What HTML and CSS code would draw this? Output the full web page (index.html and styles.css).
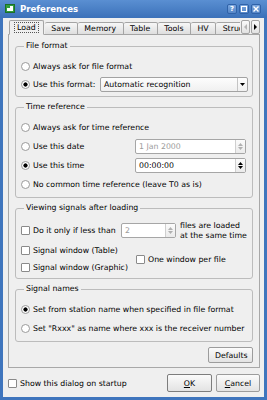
FILE: index.html
```html
<!DOCTYPE html>
<html lang="en">
<head>
  <meta charset="UTF-8">
  <title>Preferences</title>
  <link rel="stylesheet" href="styles.css">
</head>
<body>
<div class="window">
  <div class="titlebar">
    <svg class="app-icon" width="10" height="9" viewBox="0 0 10 9">
      <rect x="0.5" y="0.5" width="9" height="8" fill="#2f9e3c" stroke="#1d6e28"/>
      <rect x="2" y="2" width="6" height="5" fill="#fff"/>
      <rect x="2" y="2" width="3" height="2" fill="#2f9e3c"/>
    </svg>
    <span class="title">Preferences</span>
    <span class="tb-btn">?</span>
    <span class="tb-btn"><svg width="8" height="8" viewBox="0 0 8 8"><rect x="1.5" y="1.5" width="5" height="5" fill="none" stroke="#fff"/></svg></span>
    <span class="tb-btn"><svg width="8" height="8" viewBox="0 0 8 8"><path d="M1.5 1.5 L6.5 6.5 M6.5 1.5 L1.5 6.5" stroke="#fff" stroke-width="1.4"/></svg></span>
  </div>

  <div class="frame">
    <div class="client">
      <div class="tabbar">
        <div class="tabs">
          <span class="tab active"><span class="focus">Load</span></span>
          <span class="tab">Save</span>
          <span class="tab">Memory</span>
          <span class="tab">Table</span>
          <span class="tab">Tools</span>
          <span class="tab">HV</span>
          <span class="tab">Structure</span>
        </div>
        <span class="scroll-btn off"><svg width="5" height="6" viewBox="0 0 5 6"><path d="M4 0 L1 3 L4 6 Z" fill="#b5b5b5"/></svg></span>
        <span class="scroll-btn"><svg width="5" height="6" viewBox="0 0 5 6"><path d="M1 0 L4 3 L1 6 Z" fill="#000"/></svg></span>
      </div>

      <div class="pane">
        <fieldset class="group">
          <legend>File format</legend>
          <div class="row"><input type="radio"><span>Always ask for file format</span></div>
          <div class="row">
            <span class="lbl lbl-format"><input type="radio" checked><span>Use this format:</span></span>
            <span class="combo"><span class="combo-text">Automatic recognition</span><span class="combo-arrow"><svg width="5" height="3" viewBox="0 0 5 3"><path d="M0 0 H5 L2.5 3 Z" fill="#000"/></svg></span></span>
          </div>
        </fieldset>

        <fieldset class="group">
          <legend>Time reference</legend>
          <div class="row r19"><input type="radio"><span>Always ask for time reference</span></div>
          <div class="row r19">
            <span class="lbl lbl-time"><input type="radio"><span>Use this date</span></span>
            <span class="spin wide disabled"><span class="spin-text">1 Jan 2000</span><span class="spin-btns"><svg width="5" height="3" viewBox="0 0 5 3"><path d="M0 3 H5 L2.5 0 Z" fill="#b0b0b0"/></svg><svg width="5" height="3" viewBox="0 0 5 3"><path d="M0 0 H5 L2.5 3 Z" fill="#b0b0b0"/></svg></span></span>
          </div>
          <div class="row r19">
            <span class="lbl lbl-time"><input type="radio" checked><span>Use this time</span></span>
            <span class="spin wide"><span class="spin-text">00:00:00</span><span class="spin-btns"><svg width="5" height="3" viewBox="0 0 5 3"><path d="M0 3 H5 L2.5 0 Z" fill="#000"/></svg><svg width="5" height="3" viewBox="0 0 5 3"><path d="M0 0 H5 L2.5 3 Z" fill="#000"/></svg></span></span>
          </div>
          <div class="row r19"><input type="radio"><span>No common time reference (leave T0 as is)</span></div>
        </fieldset>

        <fieldset class="group viewing">
          <legend>Viewing signals after loading</legend>
          <div class="row tall">
            <span class="lbl lbl-less"><input type="checkbox"><span>Do it only if less than</span></span>
            <span class="spin small disabled"><span class="spin-text">2</span><span class="spin-btns"><svg width="5" height="3" viewBox="0 0 5 3"><path d="M0 3 H5 L2.5 0 Z" fill="#b0b0b0"/></svg><svg width="5" height="3" viewBox="0 0 5 3"><path d="M0 0 H5 L2.5 3 Z" fill="#b0b0b0"/></svg></span></span>
            <span class="two-line">files are loaded<br>at the same time</span>
          </div>
          <div class="windows">
            <div class="row r17"><input type="checkbox"><span>Signal window (Table)</span></div>
            <div class="row r17 per-file"><input type="checkbox"><span>One window per file</span></div>
            <div class="row r17"><input type="checkbox"><span>Signal window (Graphic)</span></div>
          </div>
        </fieldset>

        <fieldset class="group">
          <legend>Signal names</legend>
          <div class="row r19"><input type="radio" checked><span>Set from station name when specified in file format</span></div>
          <div class="row r19"><input type="radio"><span>Set "Rxxx" as name where xxx is the receiver number</span></div>
        </fieldset>

        <div class="pane-foot">
          <button class="btn defaults">Defaults</button>
        </div>
      </div>

      <div class="bottom">
        <span class="startup"><input type="checkbox"><span>Show this dialog on startup</span></span>
        <button class="btn ok"><u>O</u>K</button>
        <button class="btn cancel"><u>C</u>ancel</button>
      </div>
    </div>
  </div>
</div>
</body>
</html>
```

FILE: styles.css
```css
* {
  box-sizing: border-box;
}
body {
  margin: 0;
  font-family: "DejaVu Sans", sans-serif;
  font-size: 7.8px;
  color: #000;
}
.window {
  width: 267px;
  height: 400px;
  display: flex;
  flex-direction: column;
  background: #3f75bd;
}
.titlebar {
  height: 19px;
  display: flex;
  align-items: center;
  padding: 0 6px 1px 5px;
  background: linear-gradient(#5a8fd2, #3b71b9);
  color: #fff;
}
.app-icon {
  margin-right: 5px;
}
.title {
  font-weight: bold;
  font-size: 8.6px;
  flex: 1;
}
.tb-btn {
  width: 10px;
  height: 10px;
  margin-left: 2px;
  display: flex;
  align-items: center;
  justify-content: center;
  background: linear-gradient(#7aa6de, #5687c8);
  border: 1px solid #2f62a8;
  border-radius: 2px;
  font-weight: bold;
  font-size: 7px;
}
.frame {
  flex: 1;
  display: flex;
  padding: 0 4px 3px 3px;
}
.client {
  flex: 1;
  display: flex;
  flex-direction: column;
  background: #efefef;
  padding: 3px 4px 5px 5px;
}

/* tabs */
.tabbar {
  display: flex;
  align-items: flex-end;
  height: 14px;
  position: relative;
  z-index: 1;
  margin-bottom: -1px;
}
.tabs {
  display: flex;
  align-items: flex-end;
  width: 232px;
  overflow: hidden;
  padding-left: 1px;
}
.tab {
  flex: none;
  height: 13px;
  padding: 0 6.5px;
  display: flex;
  align-items: center;
  border: 1px solid #a4a4a4;
  border-left: none;
  border-radius: 2px 2px 0 0;
  background: linear-gradient(#f7f7f7, #dedede);
}
.tab.active {
  height: 15px;
  padding: 0 4px;
  border-left: 1px solid #a4a4a4;
  border-bottom-color: #efefef;
  background: #efefef;
  margin-right: 1px;
}
.focus {
  border: 1px dotted #555;
  padding: 0 2px;
  line-height: 9px;
}
.scroll-btn {
  width: 9px;
  height: 14px;
  margin-left: 1px;
  margin-bottom: 1px;
  display: flex;
  align-items: center;
  justify-content: center;
  border: 1px solid #a4a4a4;
  border-radius: 2px;
  background: linear-gradient(#fafafa, #e2e2e2);
}
.pane {
  flex: 1;
  display: flex;
  flex-direction: column;
  border: 1px solid #a8a8a8;
  background: #efefef;
  padding: 6px 6px 4px 6px;
}

/* group boxes */
.group {
  margin: 0 0 5px;
  border: 1px solid #bcbcbc;
  border-radius: 3px;
  padding: 6px 4px 3px 5px;
}
.group.viewing {
  padding-bottom: 2px;
}
.group legend {
  margin-left: 3px;
  padding: 0 2px;
  line-height: 10px;
}
.row {
  display: flex;
  align-items: center;
  height: 18px;
  white-space: nowrap;
}
.r19 {
  height: 19px;
}
.r17 {
  height: 17px;
}
.row.tall {
  height: 23px;
}
.lbl {
  display: flex;
  align-items: center;
}
.lbl-format {
  width: 79px;
}
.lbl-time {
  width: 114px;
}
.lbl-less {
  width: 100px;
}
input[type=radio],
input[type=checkbox] {
  appearance: none;
  margin: 0 3px 0 0;
  width: 9px;
  height: 9px;
  background: #fff;
  border: 1px solid #9a9a9a;
  flex: none;
}
input[type=radio] {
  border-radius: 50%;
}
input[type=radio]:checked {
  background: radial-gradient(circle, #000 0 1.8px, #fff 2.4px);
}
input[type=checkbox] {
  border-radius: 1px;
  border-color: #8a8a8a;
}

.combo {
  flex: 1;
  height: 15px;
  display: flex;
  border: 1px solid #a2a2a2;
  border-radius: 2px;
  background: linear-gradient(#fdfdfd, #f0f0f0);
}
.combo-text {
  flex: 1;
  padding-left: 3px;
  line-height: 13px;
}
.combo-arrow {
  width: 10px;
  display: flex;
  align-items: center;
  justify-content: center;
  border-left: 1px solid #c4c4c4;
}

.spin {
  height: 15px;
  display: flex;
  border: 1px solid #a6a6a6;
  border-radius: 2px;
  background: #fff;
}
.spin.wide {
  width: 111px;
}
.spin.small {
  width: 55px;
}
.spin-text {
  flex: 1;
  padding-left: 3px;
  line-height: 13px;
}
.spin.disabled .spin-text {
  color: #9c9c9c;
}
.spin-btns {
  width: 10px;
  display: flex;
  flex-direction: column;
  align-items: center;
  justify-content: space-around;
  padding: 2px 0;
  border-left: 1px solid #cfcfcf;
  background: linear-gradient(#fbfbfb, #ebebeb);
}
.two-line {
  margin-left: 4px;
  line-height: 10px;
}
.windows {
  display: grid;
  grid-template-columns: 115px auto;
}
.per-file {
  grid-column: 2;
  grid-row: 1 / span 2;
  align-self: center;
}

.pane-foot {
  margin-top: auto;
  display: flex;
  justify-content: flex-end;
}
.btn {
  font-family: inherit;
  font-size: inherit;
  color: #000;
  height: 16px;
  padding: 0 6px;
  border: 1px solid #9c9c9c;
  border-radius: 2px;
  background: linear-gradient(#fbfbfb, #e3e3e3);
}
.defaults {
  width: 45px;
}
.bottom {
  margin-top: 6px;
  height: 18px;
  display: flex;
  align-items: center;
  gap: 4px;
}
.startup {
  flex: 1;
  display: flex;
  align-items: center;
}
.bottom .btn {
  height: 18px;
}
.ok {
  width: 45px;
  border-color: #7d7d7d;
}
.cancel {
  width: 44px;
}
```
